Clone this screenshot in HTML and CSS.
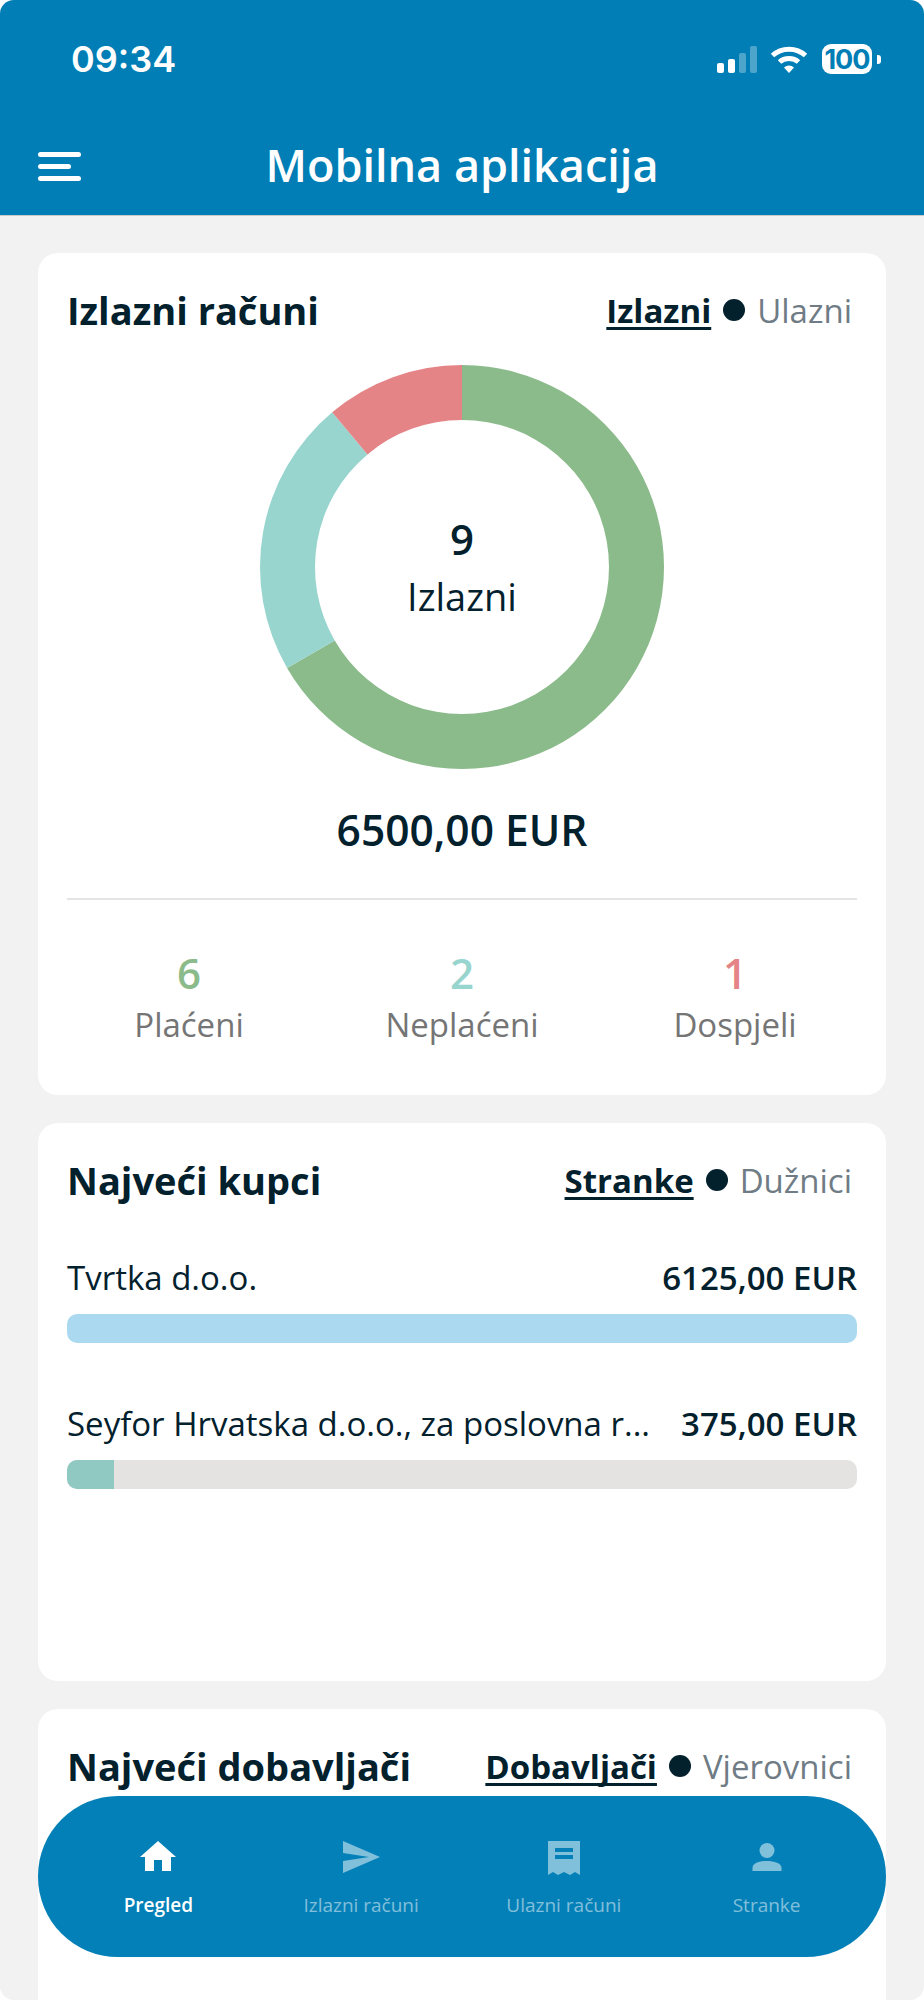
FILE: index.html
```html
<!DOCTYPE html>
<html lang="en">
<head>
    <meta charset="UTF-8">
    <meta name="viewport" content="width=device-width, initial-scale=1.0">
    <title>Mobilna aplikacija</title>
    <link rel="stylesheet" href="styles.css">
</head>
<body>
<div class="screen">

    <header class="topbar">
        <div class="status">
            <span class="time">09:34</span>
            <div class="status-icons">
                <svg class="signal" width="40" height="27" viewBox="0 0 40 27">
                    <rect x="0" y="17" width="7" height="10" rx="2" fill="#fff"/>
                    <rect x="11" y="13" width="7" height="14" rx="2" fill="#fff"/>
                    <rect x="22" y="7" width="7" height="20" rx="2" fill="#fff" opacity="0.3"/>
                    <rect x="33" y="0" width="7" height="27" rx="2" fill="#fff" opacity="0.3"/>
                </svg>
                <svg class="wifi" width="38" height="28" viewBox="0 0 38 28">
                    <path d="M2.5 10.500C11.500 2 26.500 2 35.500 10.500" fill="none" stroke="#fff" stroke-width="5"/>
                    <path d="M9.500 17C14.500 12.300 23.500 12.300 28.500 17" fill="none" stroke="#fff" stroke-width="5"/>
                    <path d="M14 22.500C17 19.800 21 19.800 24 22.500L19 28Z" fill="#fff"/>
                </svg>
                <div class="battery"><span class="battery-level">100</span></div>
                <span class="battery-tip"></span>
            </div>
        </div>
        <div class="appbar">
            <div class="burger">
                <span></span>
                <span class="short"></span>
                <span></span>
            </div>
            <h1>Mobilna aplikacija</h1>
        </div>
    </header>

    <main class="content">

        <section class="card card-invoices">
            <div class="card-head">
                <h2>Izlazni računi</h2>
                <div class="tabs">
                    <span class="tab-active">Izlazni</span>
                    <span class="tab-dot"></span>
                    <span class="tab">Ulazni</span>
                </div>
            </div>

            <div class="donut">
                <svg width="404" height="404" viewBox="0 0 404 404">
                    <path d="M202 0A202 202 0 1 1 27.060 303L74.700 275.500A147 147 0 1 0 202 55Z" fill="#8bbb8b"/>
                    <path d="M27.060 303A202 202 0 0 1 72.160 47.260L107.500 89.390A147 147 0 0 0 74.700 275.500Z" fill="#98d5cf"/>
                    <path d="M72.160 47.260A202 202 0 0 1 202 0L202 55A147 147 0 0 0 107.500 89.390Z" fill="#e58487"/>
                </svg>
                <div class="donut-label">
                    <span class="donut-count">9</span>
                    <span class="donut-name">Izlazni</span>
                </div>
            </div>

            <div class="total">6500,00 EUR</div>

            <div class="stats">
                <div class="stat">
                    <span class="stat-num paid">6</span>
                    <span class="stat-name">Plaćeni</span>
                </div>
                <div class="stat">
                    <span class="stat-num unpaid">2</span>
                    <span class="stat-name">Neplaćeni</span>
                </div>
                <div class="stat">
                    <span class="stat-num due">1</span>
                    <span class="stat-name">Dospjeli</span>
                </div>
            </div>
        </section>

        <section class="card card-buyers">
            <div class="card-head">
                <h2>Najveći kupci</h2>
                <div class="tabs">
                    <span class="tab-active">Stranke</span>
                    <span class="tab-dot"></span>
                    <span class="tab">Dužnici</span>
                </div>
            </div>

            <div class="rank">
                <div class="rank-row">
                    <span class="rank-name">Tvrtka d.o.o.</span>
                    <span class="rank-value">6125,00 EUR</span>
                </div>
                <div class="track"><div class="fill fill-blue" style="width: 100%"></div></div>
            </div>

            <div class="rank">
                <div class="rank-row">
                    <span class="rank-name">Seyfor Hrvatska d.o.o., za poslovna r...</span>
                    <span class="rank-value">375,00 EUR</span>
                </div>
                <div class="track"><div class="fill fill-teal" style="width: 6%"></div></div>
            </div>
        </section>

        <section class="card card-suppliers">
            <div class="card-head">
                <h2>Najveći dobavljači</h2>
                <div class="tabs">
                    <span class="tab-active">Dobavljači</span>
                    <span class="tab-dot"></span>
                    <span class="tab">Vjerovnici</span>
                </div>
            </div>
        </section>

    </main>

    <nav class="bottom-nav">
        <a class="nav-item active">
            <svg width="36" height="36" viewBox="0 0 36 36">
                <path d="M18 2L36 18H31V32H22V21H14V32H5V18H0Z" fill="currentColor"/>
            </svg>
            <span>Pregled</span>
        </a>
        <a class="nav-item">
            <svg width="37" height="36" viewBox="0 0 37 36">
                <path d="M0 34L37 18L0 2V14L26 18L0 22Z" fill="currentColor"/>
            </svg>
            <span>Izlazni računi</span>
        </a>
        <a class="nav-item">
            <svg width="32" height="36" viewBox="0 0 32 36">
                <path fill-rule="evenodd" d="M0 2H32V36L27 33L22 36L16 33L10 36L5 33L0 36ZM7 9V13H25V9ZM7 16V20H25V16Z" fill="currentColor"/>
            </svg>
            <span>Ulazni računi</span>
        </a>
        <a class="nav-item">
            <svg width="30" height="36" viewBox="0 0 30 36">
                <circle cx="15" cy="11.500" r="7.500" fill="currentColor"/>
                <path d="M0.500 32V29C0.500 24 8 22 15 22S29.500 24 29.500 29V32Z" fill="currentColor"/>
            </svg>
            <span>Stranke</span>
        </a>
    </nav>

</div>
</body>
</html>
```

FILE: styles.css
```css
* {
    box-sizing: border-box;
}
body {
    margin: 0;
    background-color: #ffffff;
    font-family: "Open Sans", sans-serif;
    color: #03202d;
}
.screen {
    position: relative;
    height: 2000px;
    overflow: hidden;
    border-radius: 14px;
    background-color: #f2f2f2;
}

/* top bar */
.topbar {
    height: 216px;
    background-color: #017eb5;
    border-bottom: 1px solid #c9c9c9;
    color: #ffffff;
}
.status {
    display: flex;
    justify-content: space-between;
    align-items: center;
    height: 88px;
    padding: 30px 43px 0 71px;
}
.time {
    font-family: Inter, sans-serif;
    font-size: 36px;
    font-weight: 600;
}
.status-icons {
    display: flex;
    align-items: center;
}
.wifi {
    margin-left: 13px;
}
.battery {
    display: flex;
    justify-content: center;
    align-items: center;
    width: 50px;
    height: 30px;
    margin-left: 14px;
    border-radius: 9px;
    background-color: #ffffff;
}
.battery-level {
    font-family: Inter, sans-serif;
    font-size: 27px;
    font-weight: 700;
    letter-spacing: -1px;
    color: #017eb5;
}
.battery-tip {
    width: 4px;
    height: 9px;
    margin-left: 5px;
    border-radius: 0 3px 3px 0;
    background-color: #ffffff;
}
.appbar {
    display: grid;
    grid-template-columns: 43px 1fr 43px;
    align-items: center;
    height: 70px;
    margin-top: 43px;
    padding: 0 38px;
}
.appbar h1 {
    margin: -4px 0 0;
    font-size: 45px;
    font-weight: 600;
    text-align: center;
    white-space: nowrap;
}
.burger {
    display: flex;
    flex-direction: column;
    gap: 7px;
}
.burger span {
    height: 5px;
    border-radius: 3px;
    background-color: #ffffff;
}
.burger .short {
    width: 33px;
}

/* cards */
.content {
    display: flex;
    flex-direction: column;
    gap: 28px;
    padding: 37px 38px 0;
}
.card {
    padding: 29px;
    border-radius: 20px;
    background-color: #ffffff;
}
.card-invoices {
    height: 842px;
}
.card-buyers {
    height: 558px;
}
.card-suppliers {
    height: 400px;
}
.card-head {
    display: flex;
    justify-content: space-between;
    align-items: center;
    height: 56px;
}
.card-head h2 {
    margin: 0;
    font-size: 38px;
    font-weight: 700;
}
.tabs {
    display: flex;
    align-items: center;
    gap: 12px;
    padding-right: 5px;
    font-size: 33px;
}
.tab-active {
    font-weight: 700;
    text-decoration: underline;
    text-decoration-thickness: 3px;
    text-decoration-skip-ink: none;
    text-underline-offset: 4px;
}
.tab-dot {
    width: 22px;
    height: 22px;
    border-radius: 50%;
    background-color: #03202d;
}
.tab {
    color: #6f7c85;
}

/* donut */
.donut {
    position: relative;
    width: 404px;
    height: 404px;
    margin: 27px auto 0;
}
.donut svg {
    display: block;
}
.donut-label {
    position: absolute;
    inset: 0;
    display: flex;
    flex-direction: column;
    justify-content: center;
    align-items: center;
}
.donut-count {
    font-size: 42px;
    font-weight: 600;
    line-height: 58px;
}
.donut-name {
    font-size: 38px;
    line-height: 56px;
}
.total {
    margin-top: 32px;
    font-size: 42.500px;
    font-weight: 600;
    text-align: center;
}
.stats {
    display: grid;
    grid-template-columns: repeat(3, 273px);
    justify-content: center;
    margin-top: 40px;
    padding-top: 46px;
    border-top: 2px solid #e4e4e4;
}
.stat {
    display: flex;
    flex-direction: column;
    align-items: center;
}
.stat-num {
    font-size: 42px;
    font-weight: 600;
    line-height: 54px;
}
.stat-name {
    font-size: 33px;
    line-height: 50px;
    color: #757575;
}
.paid {
    color: #8bbb8b;
}
.unpaid {
    color: #98d5cf;
}
.due {
    color: #e58487;
}

/* rank bars */
.rank {
    margin-top: 47px;
}
.rank + .rank {
    margin-top: 58px;
}
.rank-row {
    display: flex;
    justify-content: space-between;
    align-items: center;
    gap: 28px;
    height: 44px;
    font-size: 33px;
}
.rank-name {
    white-space: nowrap;
}
.rank-value {
    font-weight: 600;
    white-space: nowrap;
}
.track {
    height: 29px;
    margin-top: 15px;
    overflow: hidden;
    border-radius: 10px;
    background-color: #e4e3e1;
}
.fill {
    height: 100%;
}
.fill-blue {
    background-color: #abdaf0;
}
.fill-teal {
    background-color: #8fc9c2;
}

/* floating nav */
.bottom-nav {
    position: absolute;
    left: 38px;
    right: 38px;
    top: 1796px;
    display: grid;
    grid-template-columns: 1fr 1fr 1fr 1fr;
    height: 161px;
    padding: 43px 18px 0 19px;
    border-radius: 80px;
    background-color: #0380b7;
}
.nav-item {
    display: flex;
    flex-direction: column;
    align-items: center;
    color: rgba(255, 255, 255, 0.5);
}
.nav-item span {
    margin-top: 16px;
    font-size: 19px;
    line-height: 28px;
}
.nav-item.active {
    color: #ffffff;
}
.nav-item.active span {
    font-weight: 600;
}
```
